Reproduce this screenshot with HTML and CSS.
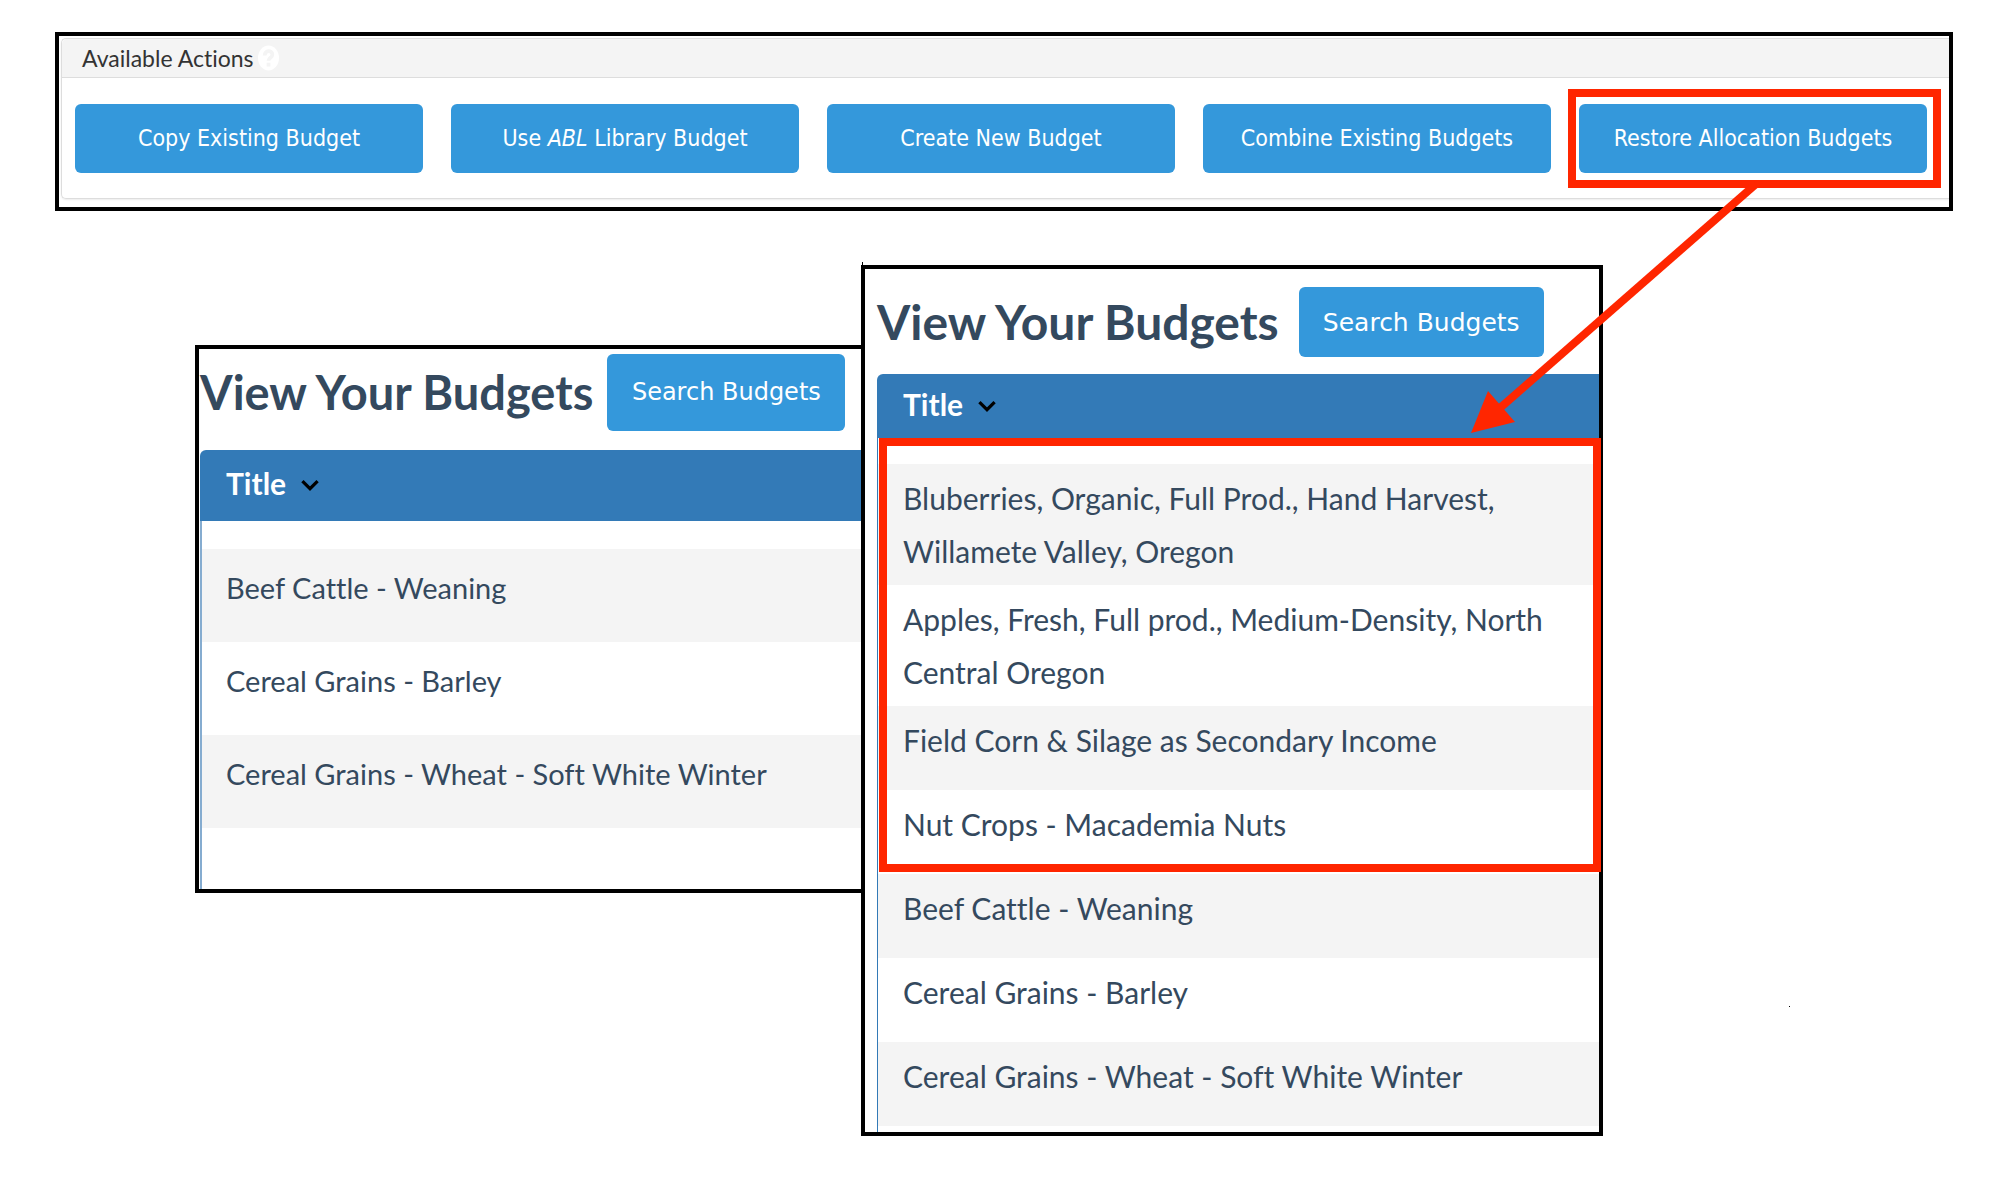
FILE: index.html
```html
<!DOCTYPE html>
<html lang="en">
<head>
<meta charset="utf-8">
<title>Restore Allocation Budgets</title>
<link rel="stylesheet" href="styles.css">
</head>
<body>
<main class="page">
  <section class="frame actions-frame">
    <div class="actions-card">
      <h2 class="actions-title">Available Actions
        <svg class="help" viewBox="0 0 22 26" aria-hidden="true">
          <ellipse cx="11" cy="13" rx="11" ry="13"/>
          <path d="M7 10.500c0-6 8-6 8-1 0 3.500-4 3-4 6.500M11 18v4"/>
        </svg>
      </h2>
      <div class="actions">
        <button class="btn" type="button">Copy Existing Budget</button>
        <button class="btn" type="button">Use <em>ABL</em> Library Budget</button>
        <button class="btn" type="button">Create New Budget</button>
        <button class="btn" type="button">Combine Existing Budgets</button>
        <button class="btn marked" type="button">Restore Allocation Budgets</button>
      </div>
    </div>
  </section>

  <div class="views">
    <section class="frame view before">
      <header class="view-head">
        <h1>View Your Budgets</h1>
        <button class="btn search" type="button">Search Budgets</button>
      </header>
      <table class="budgets">
        <thead>
          <tr><th scope="col">Title <svg class="chevron" viewBox="0 0 16 12" aria-hidden="true"><path d="M1 2l7 7 7-7"/></svg></th></tr>
        </thead>
        <tbody>
          <tr class="spacer"><td></td></tr>
          <tr class="odd"><td>Beef Cattle - Weaning</td></tr>
          <tr><td>Cereal Grains - Barley</td></tr>
          <tr class="odd"><td>Cereal Grains - Wheat - Soft White Winter</td></tr>
          <tr class="rest"><td></td></tr>
        </tbody>
      </table>
    </section>

    <section class="frame view after">
      <header class="view-head">
        <h1>View Your Budgets</h1>
        <button class="btn search" type="button">Search Budgets</button>
      </header>
      <table class="budgets">
        <thead>
          <tr><th scope="col">Title <svg class="chevron" viewBox="0 0 16 12" aria-hidden="true"><path d="M1 2l7 7 7-7"/></svg></th></tr>
        </thead>
        <tbody class="restored">
          <tr class="spacer"><td></td></tr>
          <tr class="odd"><td>Bluberries, Organic, Full Prod., Hand Harvest,<br>Willamete Valley, Oregon</td></tr>
          <tr><td>Apples, Fresh, Full prod., Medium-Density, North<br>Central Oregon</td></tr>
          <tr class="odd"><td>Field Corn &amp; Silage as Secondary Income</td></tr>
          <tr><td>Nut Crops - Macademia Nuts</td></tr>
        </tbody>
        <tbody>
          <tr class="odd"><td>Beef Cattle - Weaning</td></tr>
          <tr><td>Cereal Grains - Barley</td></tr>
          <tr class="odd"><td>Cereal Grains - Wheat - Soft White Winter</td></tr>
          <tr class="rest"><td></td></tr>
        </tbody>
      </table>
    </section>
  </div>

  <svg class="arrow" viewBox="0 0 2000 1200" aria-hidden="true">
    <path class="shaft" d="M1756 184L1500 408"/>
    <path class="head" d="M1471 433l17-42 27 31z"/>
    <path class="speck" d="M1789 1006h1v1h-1zM862 262h1v4h-1z"/>
  </svg>
</main>
</body>
</html>
```
FILE: styles.css
```css
* { box-sizing: border-box; }

body {
  margin: 0;
  background: #fff;
  color: #34495e;
  font-family: Lato, sans-serif;
  font-variant-ligatures: none;
}

.page {
  position: relative;
  padding-top: 32px;
}

.frame {
  border: 4px solid #000;
  background: #fff;
}

h1, h2 { margin: 0; }

.btn {
  position: relative;
  height: 69px;
  padding: 0 0 2px;
  border: 0;
  border-radius: 6px;
  background: #3498db;
  color: #fff;
  font-family: "DejaVu Sans Condensed", "DejaVu Sans", sans-serif;
  font-size: 23px;
  white-space: nowrap;
}

/* Actions bar */
.actions-frame {
  margin: 0 47px 0 55px;
  padding: 2px 0 8px 2px;
}

.actions-card {
  border: 1px solid #ddd;
  border-right: 0;
  border-radius: 5px 0 0 5px;
  box-shadow: 0 1px 2px rgba(0, 0, 0, 0.08);
}

.actions-title {
  display: flex;
  align-items: center;
  gap: 4px;
  height: 39px;
  padding-left: 20px;
  border-bottom: 1px solid #ddd;
  border-radius: 5px 0 0 0;
  background: #f4f4f4;
  color: #333;
  font-size: 23px;
  font-weight: 400;
}

.help { width: 21px; height: 26px; fill: #fff; }
.help path { fill: none; stroke: #f4f4f4; stroke-width: 4; }

.actions {
  display: grid;
  grid-template-columns: repeat(5, 1fr);
  gap: 28px;
  padding: 26px 22px 25px 13px;
}

.marked::after {
  content: "";
  position: absolute;
  inset: -15px -14px -15px -11px;
  border: 8px solid #ff2600;
}

/* Budget lists */
.views {
  display: grid;
  grid-template-columns: 195fr 666fr 742fr 397fr;
  align-items: start;
  margin-top: 54px;
}

.view-head { display: flex; align-items: center; }

.before {
  grid-column: 2;
  margin-top: 80px;
  padding: 4px 0 0 1px;
  border-right: 0;
}

.after {
  grid-column: 3;
  padding: 18px 0 0 12px;
}

.before .view-head { gap: 14px; height: 78px; margin-bottom: 19px; }
.after .view-head { gap: 20px; height: 70px; margin-bottom: 17px; }

h1 { font-size: 48px; line-height: 60px; font-weight: 700; }
.before h1 { font-size: 47px; }

.search { width: 245px; height: 70px; padding: 0; font-family: "DejaVu Sans", sans-serif; font-size: 25px; }
.before .search { width: 238px; height: 77px; font-size: 24px; }

.budgets {
  width: 100%;
  border-collapse: separate;
  border-spacing: 0;
  font-size: 30px;
  line-height: 53px;
}

.budgets th {
  height: 64px;
  padding: 0 0 4px 26px;
  border-radius: 6px 0 0 0;
  background: #337ab7;
  color: #fff;
  font-size: 30px;
  text-align: left;
  font-weight: 700;
}

.budgets td {
  height: 84px;
  padding: 8px 0 7px 25px;
  border-left: 1px solid #337ab7;
  vertical-align: top;
}

.before .budgets { font-size: 29px; }
.before th { height: 71px; }
.before td { height: 93px; padding-top: 12px; padding-left: 24px; border-left: 2px solid #85acd0; }
.budgets .odd td { background: #f4f4f4; background-clip: padding-box; }
.budgets .spacer td { height: 26px; padding: 0; }
.before .spacer td { height: 28px; }
.budgets .rest td { height: 6px; padding: 0; }
.before .rest td { height: 61px; }

.chevron { width: 18px; height: 13px; margin-left: 8px; vertical-align: 3px; }
.chevron path { fill: none; stroke: #000; stroke-width: 3; }

.restored { position: relative; }
.restored::after {
  content: "";
  position: absolute;
  inset: 0 -2px 2px 2px;
  border: 8px solid #ff2600;
}

/* Callout arrow over the whole page */
.arrow {
  position: absolute;
  top: 0;
  left: 0;
  width: 100%;
  pointer-events: none;
}
.shaft { stroke: #ff2600; stroke-width: 8; }
.head { fill: #ff2600; }
.speck { fill: #000; }
```
